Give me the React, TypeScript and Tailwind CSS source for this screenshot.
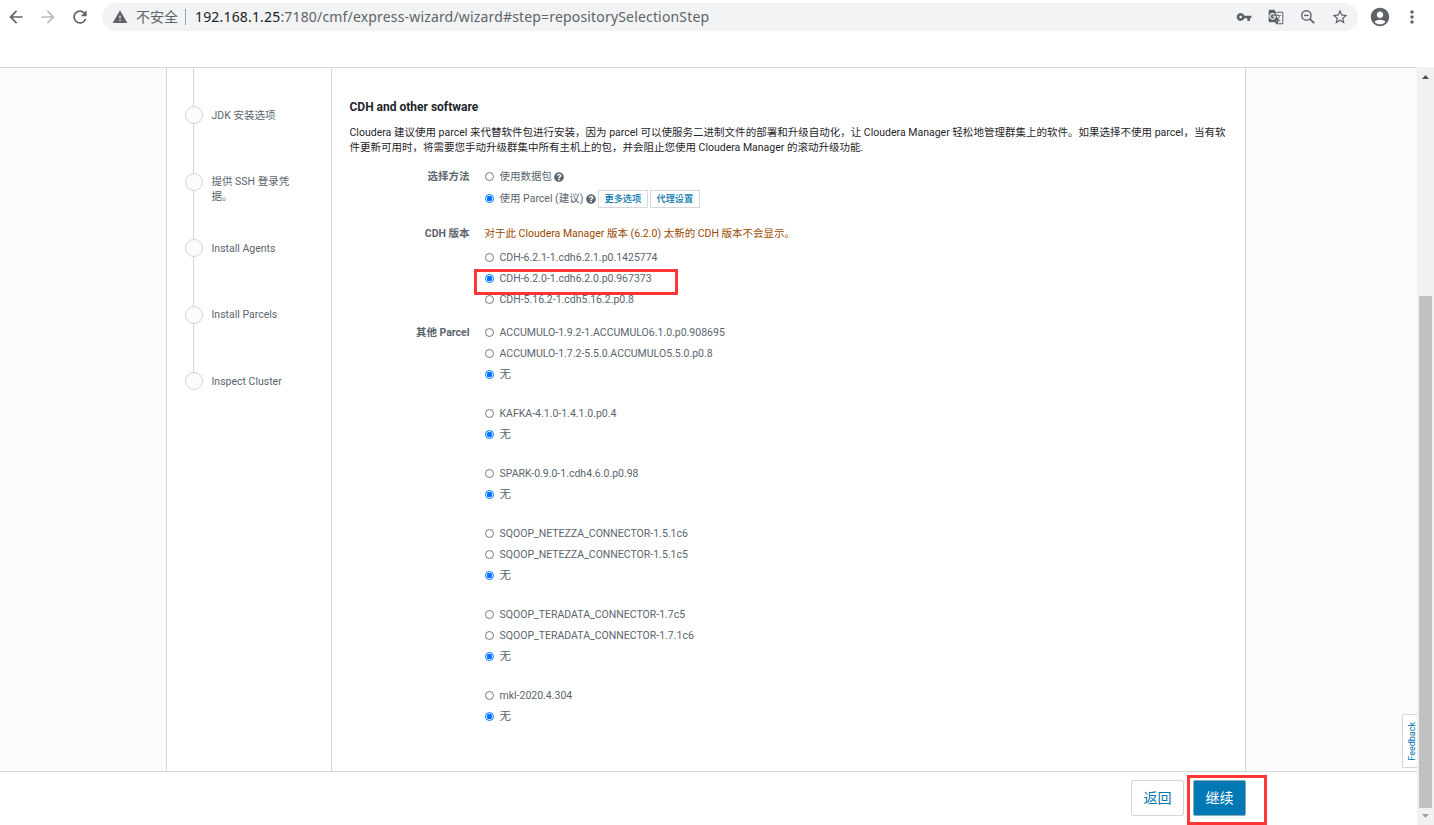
import type { ReactNode } from "react";
import { MdArrowBack, MdArrowForward, MdRefresh, MdWarning, MdVpnKey, MdGTranslate, MdStarBorder, MdAccountCircle, MdMoreVert } from "react-icons/md";
import { FaQuestionCircle } from "react-icons/fa";

const steps = ["JDK 安装选项", "提供 SSH 登录凭据。", "Install Agents", "Install Parcels", "Inspect Cluster"];

type Choice = { label: string; on?: boolean };

const cdhVersions: Choice[] = [
  { label: "CDH-6.2.1-1.cdh6.2.1.p0.1425774" },
  { label: "CDH-6.2.0-1.cdh6.2.0.p0.967373", on: true },
  { label: "CDH-5.16.2-1.cdh5.16.2.p0.8" },
];

const parcels: Choice[][] = [
  [{ label: "ACCUMULO-1.9.2-1.ACCUMULO6.1.0.p0.908695" }, { label: "ACCUMULO-1.7.2-5.5.0.ACCUMULO5.5.0.p0.8" }, { label: "无", on: true }],
  [{ label: "KAFKA-4.1.0-1.4.1.0.p0.4" }, { label: "无", on: true }],
  [{ label: "SPARK-0.9.0-1.cdh4.6.0.p0.98" }, { label: "无", on: true }],
  [{ label: "SQOOP_NETEZZA_CONNECTOR-1.5.1c6" }, { label: "SQOOP_NETEZZA_CONNECTOR-1.5.1c5" }, { label: "无", on: true }],
  [{ label: "SQOOP_TERADATA_CONNECTOR-1.7c5" }, { label: "SQOOP_TERADATA_CONNECTOR-1.7.1c6" }, { label: "无", on: true }],
  [{ label: "mkl-2020.4.304" }, { label: "无", on: true }],
];

function Row({ name, on, children }: { name: string; on?: boolean; children: ReactNode }) {
  return (
    <label className="flex h-[21px] items-center whitespace-nowrap">
      <input type="radio" name={name} defaultChecked={on} className="m-0 mr-1.5 size-[9px] shrink-0" />
      {children}
    </label>
  );
}

function Field({ label, children }: { label: string; children: ReactNode }) {
  return (
    <div className="flex">
      <div className="mr-[15px] h-[21px] w-[120px] shrink-0 text-right font-bold leading-[21px]">{label}</div>
      <div className="flex flex-col">{children}</div>
    </div>
  );
}

function Toolbar() {
  return (
    <div className="flex h-[34px] shrink-0 items-center bg-white pb-px text-[#5f6368]">
      <MdArrowBack className="ml-1.5 size-5" />
      <MdArrowForward className="ml-3 size-5 text-[#babcbe]" />
      <MdRefresh className="ml-3 size-5" />
      <div className="ml-3 flex h-7 w-[1256px] items-center rounded-full bg-[#f1f3f4] font-['Noto_Sans','Noto_Sans_CJK_SC',sans-serif] text-[14px]">
        <MdWarning className="ml-2.5 size-4" />
        <span className="ml-2">不安全</span>
        <span className="ml-[7px] mr-[9px] h-4 w-px bg-[#9aa0a6]" />
        <span className="tracking-[0.17px]"><span className="text-[#202124]">192.168.1.25</span>:7180/cmf/express-wizard/wizard#step=repositorySelectionStep</span>
        <span className="ml-auto mr-[9px] flex items-center">
          <MdVpnKey className="size-4" />
          <MdGTranslate className="ml-4 size-4" />
          <svg className="ml-4 size-4" viewBox="0 0 16 16" fill="none" stroke="currentColor" strokeWidth="1.4">
            <circle cx="6.4" cy="6.4" r="4.7" />
            <path d="M4 6.4H8.8" />
            <path d="M9.9 9.9L14.2 14.2" strokeWidth="1.7" />
          </svg>
          <MdStarBorder className="ml-[15px] size-[18px]" />
        </span>
      </div>
      <MdAccountCircle className="ml-[11px] size-[22px]" />
      <MdMoreVert className="ml-[11px] size-5" />
    </div>
  );
}

export default function App() {
  return (
    <div className="relative flex h-[825px] w-[1434px] flex-col overflow-hidden bg-white font-[Roboto,'Noto_Sans_CJK_SC',sans-serif] text-[10.5px] text-[#5a656d]">
      <Toolbar />
      <div className="h-[33px] shrink-0" />
      <div className="flex min-h-0 flex-1">
        <div className="flex min-w-0 flex-1 flex-col">
          <div className="flex h-[705px] border-y border-[#d6d8dc] bg-[#fafbfd] pl-[166px]">
            <aside className="relative w-[166px] border-x border-[#d3d5d9] bg-white">
              <div className="absolute left-[26px] top-0 h-[313px] w-px bg-[#d3d5d9]" />
              <ol className="relative flex flex-col pl-[18px] pt-[38px]">
                {steps.map((s) => (
                  <li key={s} className="flex h-[66.5px] items-start">
                    <span className="size-[18px] shrink-0 rounded-full border border-[#d3d5d9] bg-[#fafbfd]" />
                    <span className="ml-[8.5px] mt-[1.5px] w-[82px] leading-[15px]">{s}</span>
                  </li>
                ))}
              </ol>
            </aside>
            <main className="w-[914px] border-r border-[#d3d5d9] bg-white pl-[17.5px] pt-[29px]">
              <h1 className="h-5 text-[12px] font-bold leading-5 text-[#1f2529]">CDH and other software</h1>
              <div className="mt-2 whitespace-nowrap leading-[15px] text-[#1f2529]">
                <p className="tracking-[0.01px]">Cloudera 建议使用 parcel 来代替软件包进行安装，因为 parcel 可以使服务二进制文件的部署和升级自动化，让 Cloudera Manager 轻松地管理群集上的软件。如果选择不使用 parcel，当有软</p>
                <p>件更新可用时，将需要您手动升级群集中所有主机上的包，并会阻止您使用 Cloudera Manager 的滚动升级功能.</p>
              </div>
              <div className="mt-[11px] flex flex-col">
                <Field label="选择方法">
                  <Row name="method">
                    使用数据包<FaQuestionCircle className="ml-0.5 size-2.5" />
                  </Row>
                  <div className="mt-px">
                    <Row name="method" on>
                      使用 Parcel (建议)<FaQuestionCircle className="ml-[2.5px] size-2.5" />
                      <span className="ml-[2px] flex gap-[2px] text-[9.2px] font-medium text-[#0074ac]">
                        <button className="h-[18px] w-[50px] border border-[#d6d8dc] pt-px leading-none">更多选项</button>
                        <button className="h-[18px] w-[50px] border border-[#d6d8dc] pt-px leading-none">代理设置</button>
                      </span>
                    </Row>
                  </div>
                </Field>
                <div className="mt-3.5">
                  <Field label="CDH 版本">
                    <p className="h-6 whitespace-nowrap leading-[21px] text-[#994800]">对于此 Cloudera Manager 版本 (6.2.0) 太新的 CDH 版本不会显示。</p>
                    {cdhVersions.map((c) => <Row key={c.label} name="cdh" on={c.on}>{c.label}</Row>)}
                  </Field>
                </div>
                <div className="mt-3">
                  <Field label="其他 Parcel">
                    {parcels.map((group, i) => (
                      <div key={i} className="mb-[18px]">
                        {group.map((c) => (
                          <Row key={c.label} name={"parcel" + i} on={c.on}>
                            <span className={c.on ? "text-[11.5px]" : ""}>{c.label}</span>
                          </Row>
                        ))}
                      </div>
                    ))}
                  </Field>
                </div>
              </div>
            </main>
          </div>
          <footer className="flex flex-1 justify-end gap-[9px] pr-[171px] pt-2 text-[14px]">
            <button className="h-9 w-[53px] rounded-[2px] border border-[#d3d5d9] text-[#0074ac]">返回</button>
            <button className="h-9 w-[53px] rounded-[2px] border border-[#8ca9b8] bg-[#0078b4] text-white">继续</button>
          </footer>
        </div>
        <div className="flex w-[17px] flex-col items-center bg-[#f1f1f1]">
          <svg className="mt-2 h-1 w-[7px] shrink-0" viewBox="0 0 7 4"><path d="M0 4L3.5 0L7 4Z" fill="#505050" /></svg>
          <div className="mt-[217px] h-[512px] w-[13px] shrink-0 bg-[#c1c1c1]" />
          <svg className="mt-[6px] h-1 w-[7px] shrink-0" viewBox="0 0 7 4"><path d="M0 0L3.5 4L7 0Z" fill="#a3a3a3" /></svg>
        </div>
      </div>
      <div className="absolute left-[1402px] top-[714px] flex h-[54px] w-[15px] items-center justify-center rounded-l-[2px] border border-r-0 border-[#d3d5d9] bg-white pl-1">
        <span className="rotate-180 text-[9px] leading-none text-[#0074ac] [writing-mode:vertical-rl]">Feedback</span>
      </div>
      <div className="absolute left-[474px] top-[269px] h-[26px] w-[204px] border-3 border-[#fd3535]" />
      <div className="absolute left-[1187px] top-[775px] h-[50px] w-20 border-3 border-[#fd3535]" />
    </div>
  );
}
